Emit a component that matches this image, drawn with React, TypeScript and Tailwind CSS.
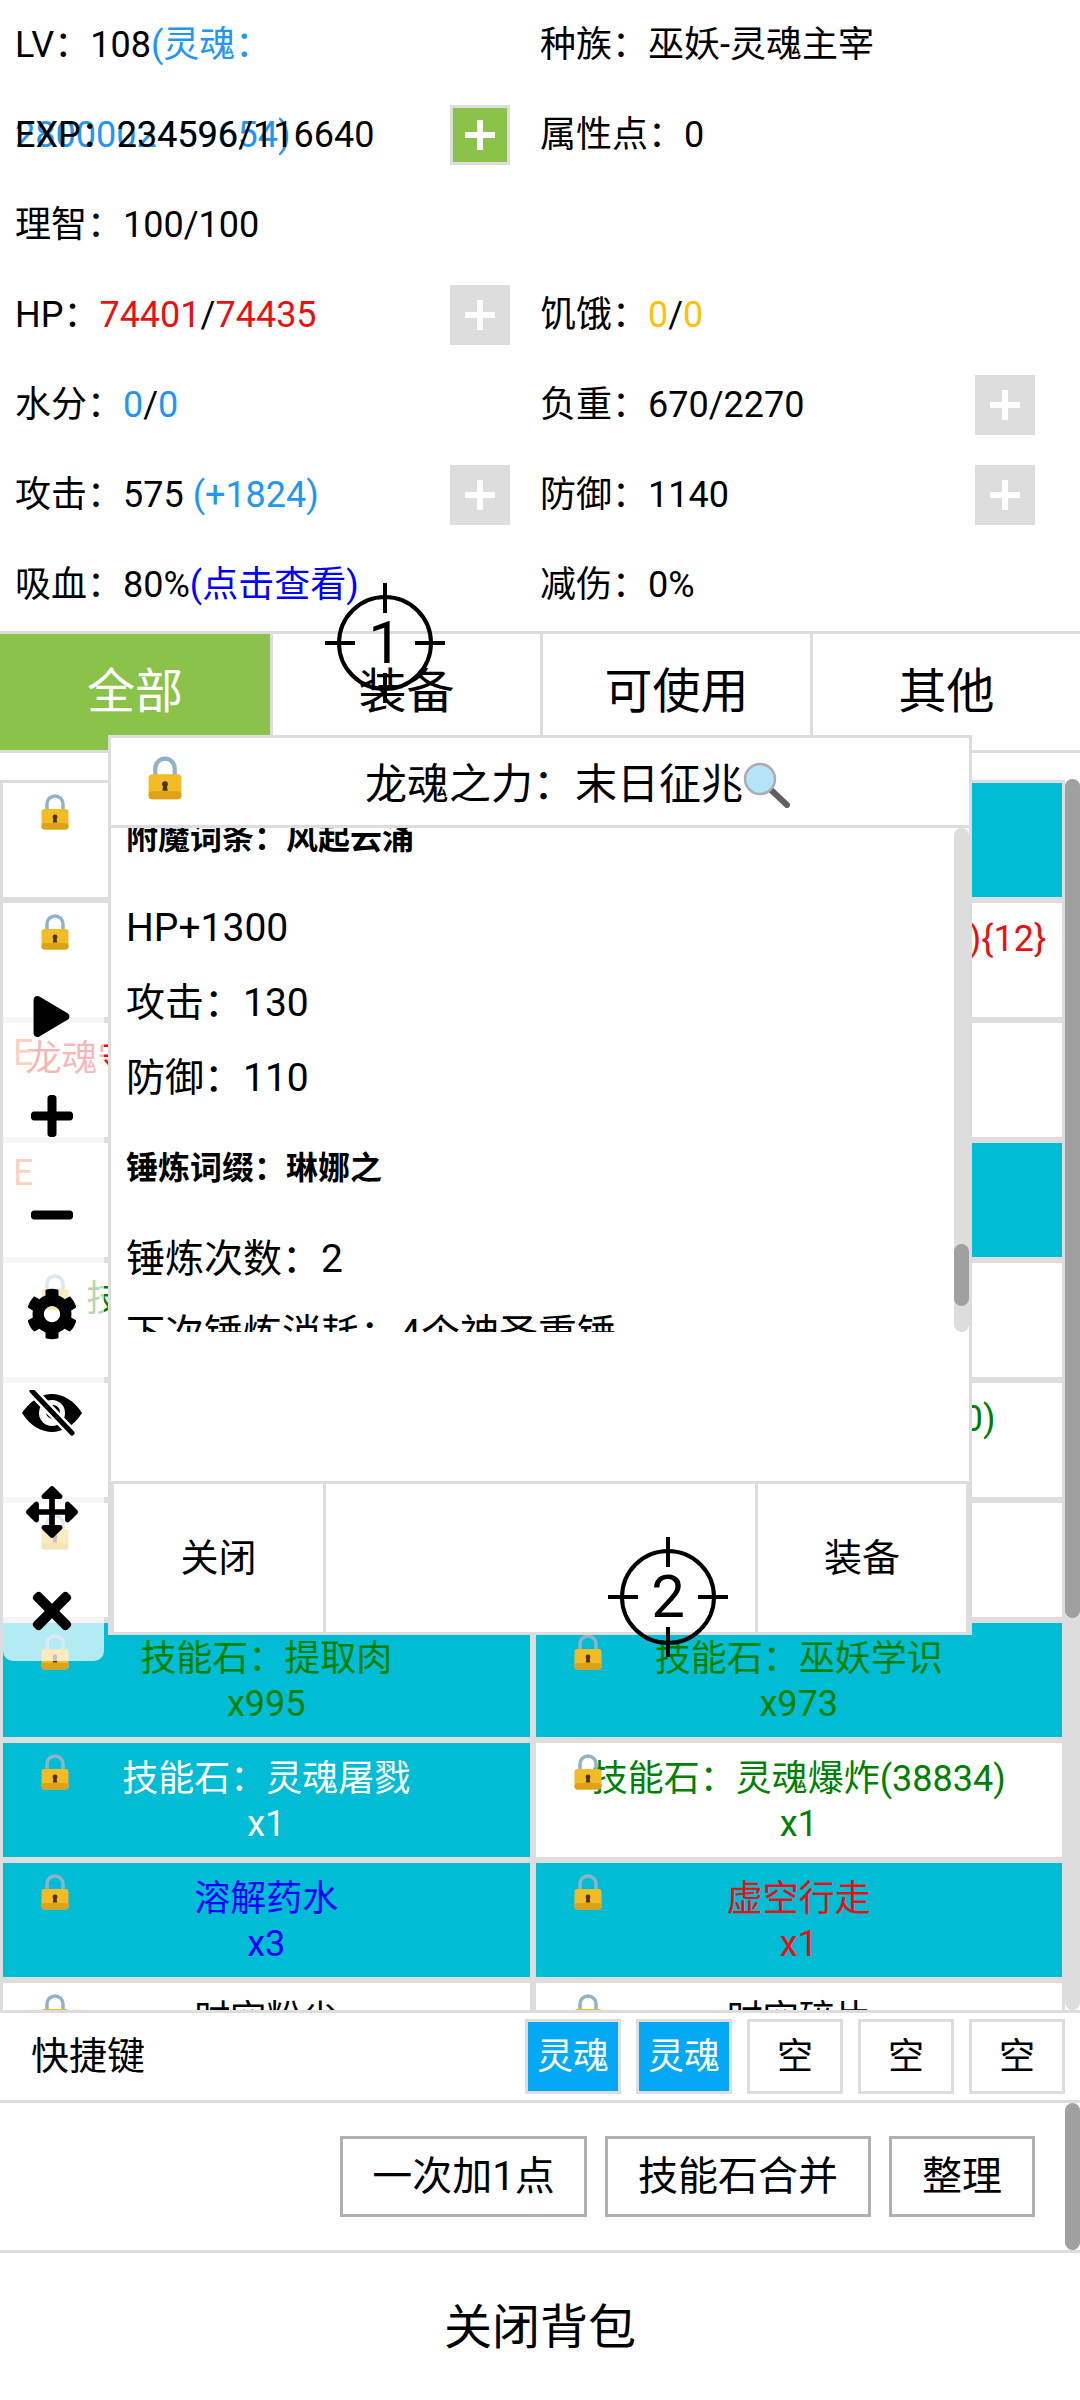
import React from 'react';
import { FaPlay, FaPlus, FaMinus, FaCog, FaArrowsAlt, FaTimes } from 'react-icons/fa';

const LockIcon = ({ className }: { className?: string }) => (
  <svg viewBox="0 0 28 36" className={className}>
    <path d="M6 17V10a8 8 0 0 1 16 0v7" fill="none" stroke="#8fb4c8" strokeWidth="3.5" />
    <rect x="0.5" y="15" width="27" height="20.5" rx="3" fill="#f3bb26" />
    <rect x="0.5" y="29" width="27" height="6.5" rx="3" fill="#dfa118" />
    <circle cx="14" cy="23" r="2.4" fill="#4a3415" />
    <path d="M12.8 23h2.4l1 5.5h-4.4z" fill="#4a3415" />
  </svg>
);

const MagnifierIcon = () => (
  <svg viewBox="0 0 48 46" className="h-[46px] w-[48px] shrink-0">
    <path d="M27 27l17 16" stroke="#5f5f5f" strokeWidth="6" strokeLinecap="round" />
    <circle cx="17" cy="17" r="15" fill="#b5e3f8" stroke="#a9adb0" strokeWidth="2.5" />
  </svg>
);

const EyeOffIcon = () => (
  <svg viewBox="0 0 60 46" className="h-[46px] w-[60px]">
    <path d="M0 23C10 8 22 4 30 4C40 4 52 10 60 23C52 36 40 42 30 42C20 42 8 36 0 23Z" fill="#000000" />
    <circle cx="30" cy="23" r="13" fill="#ffffff" />
    <circle cx="31" cy="22" r="7" fill="#000000" />
    <path d="M10 1l40 42" stroke="#ffffff" strokeWidth="10" />
    <path d="M10 1l40 42" stroke="#000000" strokeWidth="5" strokeLinecap="round" />
  </svg>
);

const AddButton = ({ active }: { active?: boolean }) => (
  <div
    className={`mr-[15px] flex h-[60px] w-[60px] shrink-0 items-center justify-center border-[3px] border-[#dddddd] ${
      active ? 'bg-[#8bc34a]' : 'bg-[#dddddd]'
    }`}
  >
    <svg viewBox="0 0 30 30" className="h-[30px] w-[30px]">
      <path d="M0 15h30M15 0v30" stroke="#ffffff" strokeWidth="6" />
    </svg>
  </div>
);

const StatCell = ({ children, add, active }: { children?: React.ReactNode; add?: boolean; active?: boolean }) => (
  <div className="flex h-[90px] w-[525px] items-center justify-between pl-[15px]">
    <div className="h-[90px] whitespace-nowrap leading-[90px]">{children}</div>
    {add && <AddButton active={active} />}
  </div>
);

const Blue = ({ children }: { children: React.ReactNode }) => <span className="text-[#2196f3]">{children}</span>;

type Item = { name?: string; count?: string; color?: string; cyan?: boolean; lock?: boolean; tag?: boolean };

const items: Item[] = [
  { lock: true },
  { cyan: true },
  { lock: true },
  { name: '龙魂之力：末日征兆(+120){12}', color: 'text-[#e81010]' },
  { tag: true, name: '龙魂守护之力：末日征兆(+12)', color: 'text-[#e81010]' },
  {},
  { tag: true },
  { cyan: true },
  { lock: true, name: '技能石：灵魂之力强化', color: 'text-[#008000]' },
  {},
  { lock: true },
  { name: '技能石：灵魂收割(3800)', color: 'text-[#008000]' },
  { lock: true },
  {},
  { lock: true, cyan: true, name: '技能石：提取肉', count: 'x995', color: 'text-[#008000]' },
  { lock: true, cyan: true, name: '技能石：巫妖学识', count: 'x973', color: 'text-[#008000]' },
  { lock: true, cyan: true, name: '技能石：灵魂屠戮', count: 'x1', color: 'text-white' },
  { lock: true, name: '技能石：灵魂爆炸(38834)', count: 'x1', color: 'text-[#008000]' },
  { lock: true, cyan: true, name: '溶解药水', count: 'x3', color: 'text-[#0000ff]' },
  { lock: true, cyan: true, name: '虚空行走', count: 'x1', color: 'text-[#e81010]' },
  { lock: true, name: '时空粉尘', count: 'x1', color: 'text-black' },
  { lock: true, name: '时空碎片', count: 'x1', color: 'text-black' },
];

const ItemCard = ({ item }: { item: Item }) => (
  <div className={`relative flex h-[120px] flex-col items-center overflow-hidden border-[3px] border-[#dddddd] pt-[14px] leading-[45px] ${item.cyan ? 'bg-[#00bcd4]' : 'bg-white'} ${item.color ?? ''}`}>
    {item.lock && <LockIcon className="absolute left-[38px] top-[11px] h-[36px] w-[28px]" />}
    {item.tag && <span className="absolute left-[10px] top-[8px] text-[#ff6a33]">E</span>}
    <div className="whitespace-nowrap">{item.name}</div>
    <div>{item.count}</div>
  </div>
);

const Crosshair = ({ n, className }: { n: string; className: string }) => (
  <div className={`absolute flex h-[124px] w-[124px] items-center justify-center ${className}`}>
    <svg viewBox="0 0 124 124" className="absolute inset-0">
      <circle cx="62" cy="62" r="46" fill="none" stroke="#000000" strokeWidth="4" />
      <path d="M62 2v30M62 92v30M2 62h30M92 62h30" stroke="#000000" strokeWidth="4" />
    </svg>
    <span className="relative text-[60px] leading-none">{n}</span>
  </div>
);

const ToolBtn = ({ children }: { children: React.ReactNode }) => (
  <div className="flex h-[99px] items-center justify-center pr-1 text-black">{children}</div>
);

export default function App() {
  return (
    <div className="relative h-[2400px] w-[1080px] overflow-hidden bg-white text-[36px] text-black [font-family:Roboto,'Noto_Sans_CJK_SC',sans-serif]">
      {/* 属性 */}
      <div className="h-[631px]">
        <div className="flex">
          <StatCell>LV：108<Blue>(灵魂：<br />2800002459654)</Blue></StatCell>
          <StatCell>种族：巫妖-灵魂主宰</StatCell>
        </div>
        <div className="flex">
          <StatCell add active>EXP：234596/116640</StatCell>
          <StatCell>属性点：0</StatCell>
        </div>
        <div className="flex">
          <StatCell>理智：100/100</StatCell>
          <StatCell />
        </div>
        <div className="flex">
          <StatCell add>HP：<span className="text-[#e81010]">74401</span>/<span className="text-[#e81010]">74435</span></StatCell>
          <StatCell>饥饿：<span className="text-[#ffc107]">0</span>/<span className="text-[#ffc107]">0</span></StatCell>
        </div>
        <div className="flex">
          <StatCell>水分：<Blue>0</Blue>/<Blue>0</Blue></StatCell>
          <StatCell add>负重：670/2270</StatCell>
        </div>
        <div className="flex">
          <StatCell add>攻击：575 <Blue>(+1824)</Blue></StatCell>
          <StatCell add>防御：1140</StatCell>
        </div>
        <div className="flex">
          <StatCell>吸血：80%<span className="text-[#0000ff]">(点击查看)</span></StatCell>
          <StatCell>减伤：0%</StatCell>
        </div>
      </div>

      {/* 分类 */}
      <div className="grid h-[122px] grid-cols-4 border-y-[3px] border-[#dddddd] text-[48px]">
        <div className="flex items-center justify-center bg-[#8bc34a] text-white">全部</div>
        <div className="flex items-center justify-center border-l-[3px] border-[#dddddd]">装备</div>
        <div className="flex items-center justify-center border-l-[3px] border-[#dddddd]">可使用</div>
        <div className="flex items-center justify-center border-l-[3px] border-[#dddddd]">其他</div>
      </div>

      {/* 背包 */}
      <div className="relative h-[1257px] overflow-hidden pt-[27px]">
        <div className="grid w-[1065px] grid-cols-2">
          {items.map((item, i) => (
            <ItemCard key={i} item={item} />
          ))}
        </div>
        <div className="absolute bottom-0 right-0 top-[26px] w-[15px] rounded-full bg-[#dddddd]">
          <div className="h-[839px] rounded-full bg-[#a0a0a0]" />
        </div>
      </div>

      {/* 快捷键 */}
      <div className="flex h-[93px] items-center justify-between border-y-[3px] border-[#dddddd] pl-[31px] pr-[15px]">
        <span className="text-[38px]">快捷键</span>
        <div className="flex gap-[15px]">
          {['灵魂', '灵魂', '空', '空', '空'].map((label, i) => (
            <div
              key={i}
              className={`flex h-[75px] w-[96px] items-center justify-center border-[3px] border-[#dddddd] ${
                label === '灵魂' ? 'bg-[#03a9f4] text-white' : 'bg-white'
              }`}
            >
              {label}
            </div>
          ))}
        </div>
      </div>

      {/* 操作 */}
      <div className="relative flex h-[150px] items-center justify-end gap-[18px] border-b-[3px] border-[#dddddd] pr-[45px] text-[40px]">
        {[
          ['一次加1点', 'w-[247px]'],
          ['技能石合并', 'w-[266px]'],
          ['整理', 'w-[146px]'],
        ].map(([label, width]) => (
          <div key={label} className={`flex h-[81px] items-center justify-center border-[3px] border-[#b0b0b0] ${width}`}>
            {label}
          </div>
        ))}
        <div className="absolute bottom-0 right-0 top-0 w-[15px] rounded-full bg-[#a0a0a0]" />
      </div>

      <div className="flex h-[150px] items-center justify-center text-[48px]">关闭背包</div>

      {/* 悬浮工具条 */}
      <div className="absolute left-[3px] top-[961px] flex h-[700px] w-[101px] flex-col rounded-[10px] bg-white/70 pt-[6px]">
        <ToolBtn><FaPlay size={41} /></ToolBtn>
        <ToolBtn><FaPlus size={48} /></ToolBtn>
        <ToolBtn><FaMinus size={48} /></ToolBtn>
        <ToolBtn><FaCog size={52} /></ToolBtn>
        <ToolBtn><EyeOffIcon /></ToolBtn>
        <ToolBtn><FaArrowsAlt size={52} /></ToolBtn>
        <ToolBtn><FaTimes size={56} /></ToolBtn>
      </div>

      {/* 详情弹窗 */}
      <div className="absolute left-[108px] top-[735px] flex h-[900px] w-[864px] flex-col border-[3px] border-[#dddddd] bg-white">
        <div className="relative flex h-[90px] shrink-0 items-center justify-center border-b-[3px] border-[#dddddd] pl-[76px] pt-[6px] text-[42px]">
          <LockIcon className="absolute left-[37px] top-[18px] h-[44px] w-[34px]" />
          <span>龙魂之力：末日征兆</span>
          <MagnifierIcon />
        </div>
        <div className="relative h-[504px] shrink-0 overflow-hidden pl-[15px]">
          <div className="-mt-[12px] text-[39px] leading-[75px]">
            <div className="text-[32px] font-bold leading-[44px]">附魔词条：风起云涌</div>
            <div className="mt-[31px]">HP+1300</div>
            <div>攻击：130</div>
            <div>防御：110</div>
            <div className="mt-[21px] text-[32px] font-bold leading-[62px]">锤炼词缀：琳娜之</div>
            <div className="mt-[23px]">锤炼次数：2</div>
            <div>下次锤炼消耗：4个神圣重锤</div>
          </div>
          <div className="absolute bottom-0 right-0 top-0 w-[15px] rounded-full bg-[#dddddd]">
            <div className="absolute bottom-[26px] h-[62px] w-full rounded-full bg-[#a0a0a0]" />
          </div>
        </div>
        <div className="flex-1" />
        <div className="flex h-[151px] shrink-0 border-x-[3px] border-t-[3px] border-[#dddddd] text-[38px]">
          <div className="flex w-[209px] items-center justify-center">关闭</div>
          <div className="w-[435px] border-x-[3px] border-[#dddddd]" />
          <div className="flex flex-1 items-center justify-center">装备</div>
        </div>
      </div>

      <Crosshair n="1" className="left-[323px] top-[581px]" />
      <Crosshair n="2" className="left-[606px] top-[1535px]" />
    </div>
  );
}
